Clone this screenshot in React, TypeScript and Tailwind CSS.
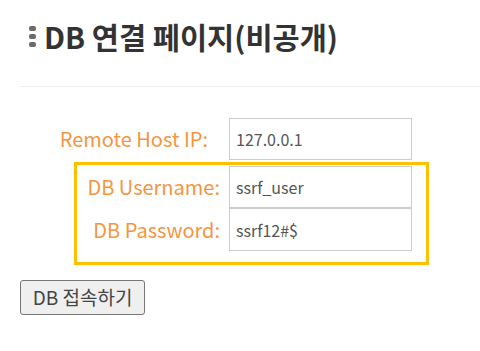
export default function App() {
  return (
    <main className="min-h-screen bg-white pl-5 pt-[17px] font-['Noto_Sans_CJK_KR',sans-serif]">
      {/* 제목 */}
      <h1 className="flex items-center gap-[8px] pl-[9px] text-[29.5px] font-bold leading-[38px] text-[#333]">
        <span className="flex flex-col gap-[3px]">
          <span className="h-[5px] w-[7px] rounded-[2px] bg-[#6b6b6b]" />
          <span className="h-[5px] w-[7px] rounded-[2px] bg-[#6b6b6b]" />
          <span className="h-[5px] w-[7px] rounded-[2px] bg-[#6b6b6b]" />
        </span>
        DB 연결 페이지(비공개)
      </h1>

      <hr className="mt-[31px] border-0 border-t border-[#eeeeee]" />

      {/* 접속 폼 */}
      <form className="mt-[31px] flex flex-col">
        <div className="flex items-center">
          <label className="w-[188px] text-right text-[20px] text-[#f5953f]">Remote Host IP:</label>
          <input
            readOnly
            value="127.0.0.1"
            className="ml-[21px] h-[42px] w-[183px] border border-[#cccccc] px-[6px] text-[16px] text-[#555] outline-none"
          />
        </div>

        <div className="ml-[54px] mt-[2px] w-[355px] border-[3px] border-[#ffc000] pb-[11px]">
          <div className="flex items-center">
            <label className="w-[143px] text-right text-[20px] text-[#f5953f]">DB Username:</label>
            <input
              readOnly
              value="ssrf_user"
              className="ml-[9px] mt-px h-[42px] w-[183px] border border-[#cccccc] px-[6px] text-[16px] text-[#555] outline-none"
            />
          </div>
          <div className="flex items-center">
            <label className="w-[143px] text-right text-[20px] text-[#f5953f]">DB Password:</label>
            <input
              readOnly
              value="ssrf12#$"
              className="ml-[9px] h-[43px] w-[183px] border border-[#cccccc] px-[6px] text-[16px] text-[#555] outline-none"
            />
          </div>
        </div>

        <div className="mt-[15px]">
          <button
            type="button"
            className="h-[35px] w-[125px] rounded-[3px] border border-[#767676] bg-[#efefef] text-[19px] text-[#444]"
          >
            DB 접속하기
          </button>
        </div>
      </form>
    </main>
  );
}
